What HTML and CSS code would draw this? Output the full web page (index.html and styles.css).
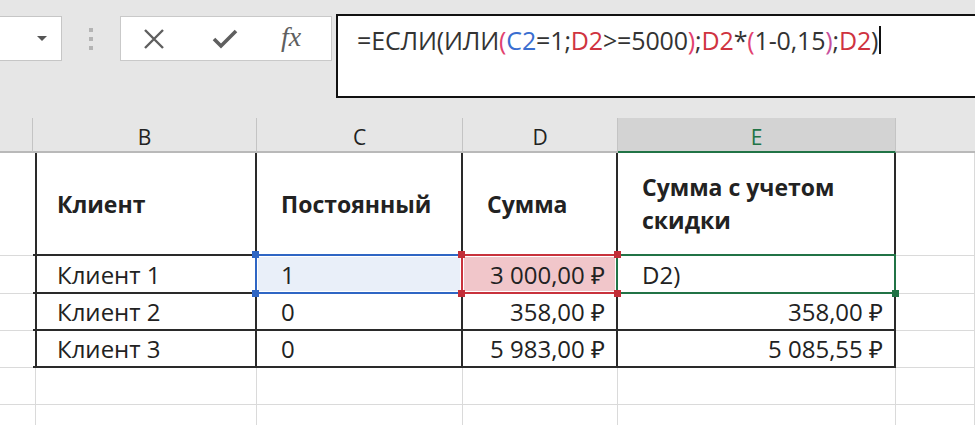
FILE: index.html
```html
<!DOCTYPE html>
<html lang="ru">
<head>
  <meta charset="UTF-8">
  <title>ЕСЛИ / ИЛИ</title>
  <link rel="stylesheet" href="styles.css">
</head>
<body>

  <div class="toolbar">
    <div class="name-box">
      <span class="arrow"></span>
    </div>
    <div class="grip"><i></i><i></i><i></i></div>
    <div class="fx-buttons">
      <svg width="26" height="26" viewBox="0 0 26 26"><path d="M4 4 L22 22 M22 4 L4 22" stroke="#5f5f5f" stroke-width="2.4" fill="none"/></svg>
      <svg width="28" height="26" viewBox="0 0 28 26"><path d="M3 13 L10 20 L25 5" stroke="#5f5f5f" stroke-width="3.6" fill="none"/></svg>
      <span class="fx">fx</span>
    </div>
    <div class="formula">
      =ЕСЛИ(ИЛИ<span class="p1">(</span><span class="ref-c">C2</span>=1;<span class="ref-d">D2</span>&gt;=5000<span class="p1">)</span>;<span class="ref-d">D2</span>*<span class="p1">(</span>1-0,15<span class="p2">)</span>;<span class="ref-d">D2</span>)<span class="caret"></span>
    </div>
  </div>

  <!-- лист -->
  <div class="sheet">
    <div class="hd"></div>
    <div class="hd">B</div>
    <div class="hd">C</div>
    <div class="hd">D</div>
    <div class="hd active">E</div>
    <div class="hd last"></div>

    <div class="c edge"></div>
    <div class="c t bold">Клиент</div>
    <div class="c t bold">Постоянный</div>
    <div class="c t bold">Сумма</div>
    <div class="c t bold wrap">Сумма с учетом скидки</div>
    <div class="c"></div>

    <div class="c edge"></div>
    <div class="c t">Клиент 1</div>
    <div class="c t sel-c">1
      <span class="box blue"></span><i class="dot blue tl"></i><i class="dot blue bl"></i>
    </div>
    <div class="c t num sel-d">3 000,00 ₽
      <span class="box red"></span><i class="dot red tl"></i><i class="dot red bl"></i><i class="dot red tr"></i><i class="dot red br"></i>
    </div>
    <div class="c t">D2)
      <span class="box green"></span><i class="dot green br"></i>
    </div>
    <div class="c"></div>

    <div class="c edge"></div>
    <div class="c t">Клиент 2</div>
    <div class="c t">0</div>
    <div class="c t num">358,00 ₽</div>
    <div class="c t num">358,00 ₽</div>
    <div class="c"></div>

    <div class="c edge"></div>
    <div class="c t">Клиент 3</div>
    <div class="c t">0</div>
    <div class="c t num">5 983,00 ₽</div>
    <div class="c t num">5 085,55 ₽</div>
    <div class="c"></div>

    <div class="c"></div><div class="c"></div><div class="c"></div><div class="c"></div><div class="c"></div><div class="c"></div>
    <div class="c"></div><div class="c"></div><div class="c"></div><div class="c"></div><div class="c"></div><div class="c"></div>
  </div>

</body>
</html>
```

FILE: styles.css
```css
body {
  margin: 0;
  background: #fff;
  font-family: "Open Sans", "Noto Sans", sans-serif;
  color: #222;
  overflow: hidden;
}

/* верхняя панель */
.toolbar {
  display: flex;
  align-items: flex-start;
  height: 118px;
  padding-top: 14px;
  box-sizing: border-box;
  background: #e6e6e6;
}

.name-box {
  width: 64px;
  height: 45px;
  margin: 2px 0 0 -2px;
  background: #fff;
  border: 1px solid #c6c6c6;
  box-sizing: border-box;
  display: flex;
  align-items: center;
  justify-content: flex-end;
  padding-right: 14px;
}

.arrow {
  width: 0;
  height: 0;
  border-left: 5px solid transparent;
  border-right: 5px solid transparent;
  border-top: 5px solid #555;
}

.grip {
  width: 58px;
  height: 45px;
  margin-top: 2px;
  display: flex;
  flex-direction: column;
  align-items: center;
  justify-content: center;
  gap: 5px;
}

.grip i {
  width: 4px;
  height: 4px;
  background: #b4b4b4;
}

.fx-buttons {
  width: 212px;
  height: 45px;
  margin-top: 2px;
  background: #fff;
  border: 1px solid #c9c9c9;
  box-sizing: border-box;
  display: flex;
  align-items: center;
  padding-left: 20px;
  gap: 44px;
}

.fx {
  font-family: "Liberation Serif", serif;
  font-style: italic;
  font-size: 28px;
  color: #5f5f5f;
  margin-left: -2px;
  margin-top: -3px;
}

.formula {
  flex: 1;
  height: 84px;
  margin-left: 4px;
  margin-right: -4px;
  border: 2px solid #111;
  background: #fff;
  box-sizing: border-box;
  padding: 9px 0 0 19px;
  font-size: 25px;
  line-height: 30px;
  color: #333;
  white-space: nowrap;
  letter-spacing: -0.15px;
}

.ref-c { color: #3a6ed0; }
.ref-d { color: #cf3340; }
.p1 { color: #e2416f; }
.p2 { color: #c7509c; }

.caret {
  display: inline-block;
  width: 2px;
  height: 28px;
  background: #111;
  vertical-align: top;
  margin: 1px 0 0 1px;
}

/* сетка листа */
.sheet {
  display: grid;
  grid-template-columns: 33px 224px 206px 155px 278px 1fr;
  grid-template-rows: 35px 103px 38px 37px 37px 37px 37px;
  font-size: 24px;
}

.hd {
  background: #e6e6e6;
  border-right: 1px solid #c4c4c4;
  border-bottom: 2px solid #b9b9b9;
  display: flex;
  align-items: center;
  justify-content: center;
  color: #222;
  font-size: 21px;
  padding-top: 4px;
  box-sizing: border-box;
}

.hd.active {
  background: #d3d3d3;
  color: #217346;
  border-bottom-color: #217346;
}

.hd.last { border-right: none; }

.c {
  position: relative;
  border-right: 1px solid #dadada;
  border-bottom: 1px solid #dadada;
  display: flex;
  align-items: center;
  padding: 0 11px 0 24px;
  box-sizing: border-box;
  white-space: nowrap;
}

.c.edge { border-right: 2px solid #2a2a2a; }

.c.t {
  border-right: 2px solid #2a2a2a;
  border-bottom: 2px solid #2a2a2a;
}

.bold { font-weight: bold; font-size: 23px; }

.wrap {
  white-space: normal;
  line-height: 33px;
  padding-right: 20px;
}

.num { justify-content: flex-end; }

.sel-c { background: #e9eff9; }
.sel-d { background: #f1c6ca; }

/* выделение диапазонов */
.box {
  position: absolute;
  top: -2px;
  left: -2px;
  right: -2px;
  bottom: -2px;
  border: 2px solid;
  box-shadow: inset 0 0 0 1px #fff;
}

.box.blue { border-color: #2f66c4; }
.box.red { border-color: #c8323c; }
.box.green { border-color: #217346; }

.dot {
  position: absolute;
  width: 7px;
  height: 7px;
  z-index: 2;
}

.dot.blue { background: #2f66c4; }
.dot.red { background: #c22e38; }
.dot.green { background: #217346; }

.dot.tl { top: -5px; left: -5px; }
.dot.bl { bottom: -5px; left: -5px; }
.dot.tr { top: -5px; right: -5px; }
.dot.br { bottom: -5px; right: -5px; }
```
